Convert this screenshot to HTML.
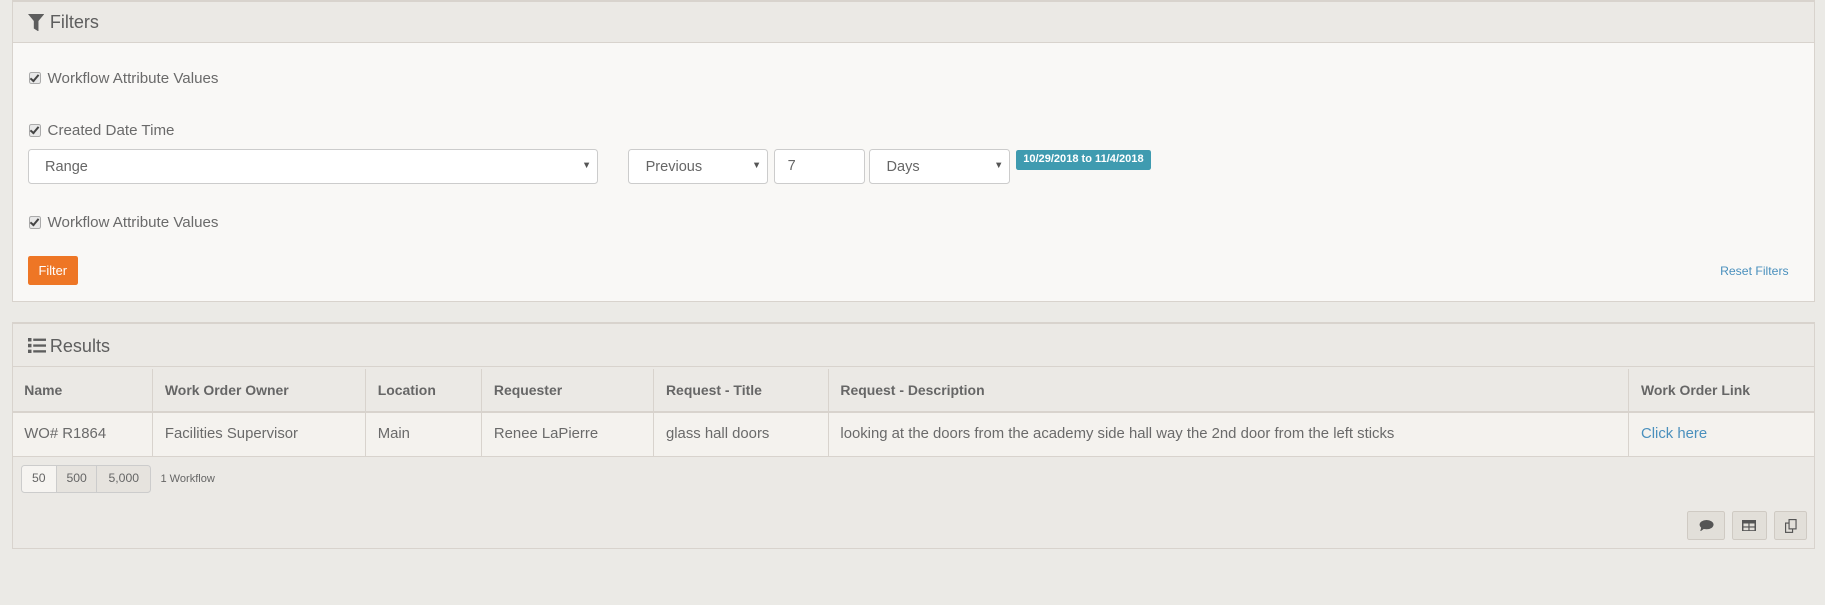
<!DOCTYPE html>
<html><head><meta charset="utf-8"><style>
html,body{margin:0;padding:0;background:#ebeae6;}
body{width:1825px;height:605px;overflow:hidden;}
#z{zoom:1.16390;width:1568px;height:520px;position:relative;font-family:"Liberation Sans",sans-serif;color:#6a6a6a;}
.a{position:absolute;}
.panel{position:absolute;left:10px;width:1548px;border:1px solid #d8d3cd;border-top:2px solid #d8d3cd;}
.hd{background:#ebe9e5;border-bottom:1px solid #d8d3cd;position:relative;}
.title{position:absolute;left:32px;font-size:15.5px;color:#5e5e5e;}
.cb{position:absolute;width:9px;height:9px;border:1px solid #aaa;border-radius:2px;background:#e8e8e8;}
.cb:after{content:"";position:absolute;left:2px;top:0px;width:3px;height:6px;border:solid #444;border-width:0 2px 2px 0;transform:rotate(40deg);}
.lbl{position:absolute;font-size:13px;color:#6a6a6a;}
.sel{position:absolute;background:#fff;border:1px solid #ccc;border-radius:3px;box-sizing:border-box;font-size:12.5px;color:#666;}
.sel span{position:absolute;left:14px;top:8px;}
.sel i{position:absolute;right:5px;top:9px;font-style:normal;font-size:8px;color:#555;}
table{border-collapse:collapse;position:absolute;left:0;top:38px;width:1548px;font-size:12.8px;}
th{background:#ebe9e5;text-align:left;font-weight:bold;font-size:12px;color:#666;height:36px;padding:0 0 0 10px;border-right:1px solid #d8d3cd;border-bottom:2px solid #d8d3cd;}
td{background:#f4f2ee;height:37px;padding:0 0 0 10px;border-right:1px solid #d8d3cd;border-bottom:1px solid #d8d3cd;color:#6a6a6a;}
th:last-child,td:last-child{border-right:none;}
.pg{position:absolute;top:121px;height:24px;border:1px solid #ccc;box-sizing:border-box;font-size:10.5px;line-height:22px;text-align:center;color:#666;background:#e6e3de;}
.btn{position:absolute;top:160px;height:25px;border:1px solid #cfcac3;border-radius:2px;box-sizing:border-box;background:#e2dfd9;}
</style></head><body><div id="z">
<div class="panel" style="top:0;height:257px;background:#f9f8f6;">
 <div class="hd" style="height:34px;">
  <svg class="a" style="left:13px;top:10px" width="14" height="15" viewBox="0 0 14 15"><path d="M0 0H14L9 6V15L5 12.5V6Z" fill="#5e5e5e"/></svg>
  <div class="title" style="top:9px;">Filters</div>
 </div>
 <div class="cb" style="left:14px;top:60px"></div><div class="lbl" style="left:30px;top:58px">Workflow Attribute Values</div>
 <div class="cb" style="left:14px;top:105px"></div><div class="lbl" style="left:30px;top:103px">Created Date Time</div>
 <div class="sel" style="left:13px;top:126px;width:490px;height:30px;"><span>Range</span><i>▼</i></div>
 <div class="sel" style="left:529px;top:126px;width:120px;height:30px;"><span>Previous</span><i>▼</i></div>
 <div class="sel" style="left:654px;top:126px;width:78px;height:30px;"><span style="left:11px;top:7px">7</span></div>
 <div class="sel" style="left:736px;top:126px;width:121px;height:30px;"><span>Days</span><i>▼</i></div>
 <div class="a" style="left:862px;top:127px;width:116px;height:17px;background:#3f9bb0;border-radius:2px;color:#fff;font-size:9.5px;font-weight:bold;line-height:17px;text-align:center;">10/29/2018 to 11/4/2018</div>
 <div class="cb" style="left:14px;top:184px"></div><div class="lbl" style="left:30px;top:182px">Workflow Attribute Values</div>
 <div class="a" style="left:13px;top:218px;width:43px;height:25px;background:#ee7625;border-radius:2px;color:#fff;font-size:11px;line-height:25px;text-align:center;">Filter</div>
 <div class="a" style="left:1467px;top:225px;font-size:10.5px;color:#4a90bd;">Reset Filters</div>
</div>
<div class="panel" style="top:277px;height:192px;background:#ebe9e5;">
 <div class="hd" style="height:36px;border-bottom:1px solid #d8d3cd;">
  <svg class="a" style="left:13px;top:12px" width="16" height="13" viewBox="0 0 16 13"><g fill="#5e5e5e"><rect x="0" y="0" width="3" height="3"/><rect x="0" y="5" width="3" height="3"/><rect x="0" y="10" width="3" height="3"/><rect x="4.5" y="0.5" width="11" height="2"/><rect x="4.5" y="5.5" width="11" height="2"/><rect x="4.5" y="10.5" width="11" height="2"/></g></svg>
  <div class="title" style="top:10px;">Results</div>
 </div>
 <table>
  <tr><th style="width:110px">Name</th><th style="width:172px">Work Order Owner</th><th style="width:89px">Location</th><th style="width:137px">Requester</th><th style="width:139px">Request - Title</th><th style="width:677px">Request - Description</th><th>Work Order Link</th></tr>
  <tr><td>WO# R1864</td><td>Facilities Supervisor</td><td>Main</td><td>Renee LaPierre</td><td>glass hall doors</td><td>looking at the doors from the academy side hall way the 2nd door from the left sticks</td><td style="color:#4a90bd">Click here</td></tr>
 </table>
 <div class="pg" style="left:7px;width:31px;background:#f6f4f1;border-radius:3px 0 0 3px;">50</div>
 <div class="pg" style="left:37px;width:36px;">500</div>
 <div class="pg" style="left:72px;width:47px;border-radius:0 3px 3px 0;">5,000</div>
 <div class="a" style="left:127px;top:128px;font-size:9.5px;color:#666;">1 Workflow</div>
 <div class="btn" style="left:1439px;width:32px;"><svg class="a" style="left:9px;top:7px" width="13" height="10" viewBox="0 0 13 10"><ellipse cx="6.5" cy="4" rx="6" ry="4" fill="#555"/><path d="M2 6L1 10L5 7Z" fill="#555"/></svg></div>
 <div class="btn" style="left:1477px;width:30px;"><svg class="a" style="left:8px;top:7px" width="12" height="10" viewBox="0 0 12 10"><rect x="0.5" y="0.5" width="11" height="9" fill="none" stroke="#555" stroke-width="1.5"/><rect x="0" y="0" width="12" height="3" fill="#555"/><line x1="6" y1="3" x2="6" y2="10" stroke="#555"/><line x1="0" y1="6" x2="12" y2="6" stroke="#555"/></svg></div>
 <div class="btn" style="left:1513px;width:29px;"><svg class="a" style="left:9px;top:6px" width="10" height="12" viewBox="0 0 10 12"><rect x="0.5" y="3.5" width="6" height="8" fill="#e2dfd9" stroke="#555"/><rect x="3.5" y="0.5" width="6" height="8" fill="#e2dfd9" stroke="#555"/></svg></div>
</div>
</div></body></html>
